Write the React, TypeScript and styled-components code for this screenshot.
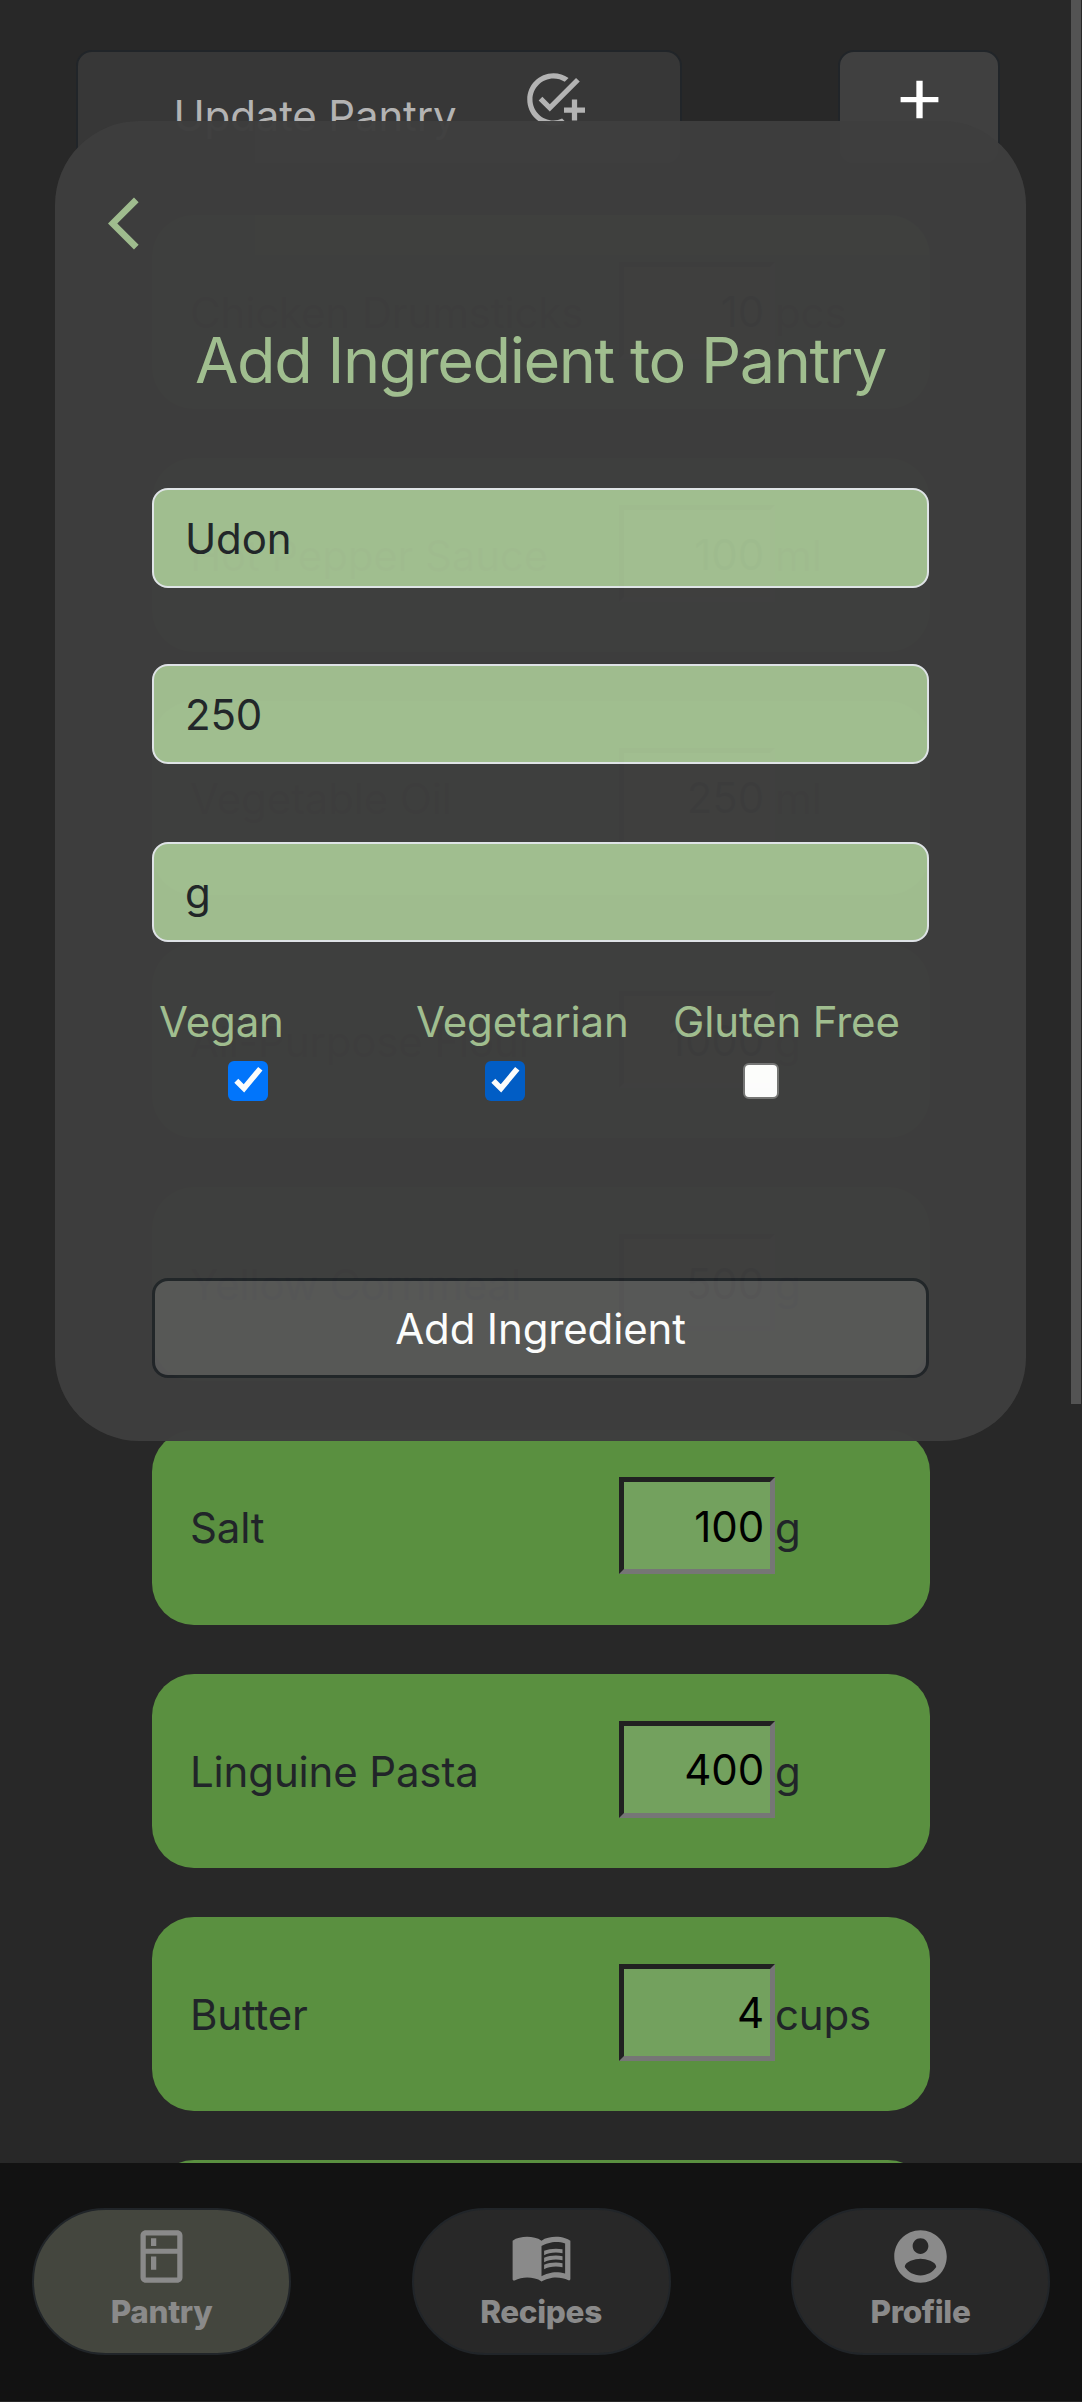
import React from "react";
import styled, { createGlobalStyle } from "styled-components";

const GlobalStyle = createGlobalStyle`
  *, *::before, *::after { box-sizing: border-box; }
  body {
    margin: 0;
    background: #282828;
    font-family: Inter, "Liberation Sans", sans-serif;
    font-size: 42px;
    line-height: 63px;
    letter-spacing: -0.15px;
    color: #212529;
  }
  input, button { font-family: inherit; letter-spacing: inherit; margin: 0; }
`;

const Page = styled.div`
  position: relative;
  height: 2402px;
  overflow: hidden;
  background: #282828;
`;

const Header = styled.header`
  display: flex;
  justify-content: space-between;
  padding: 50px 82px 0 76px;
`;

const HeaderButton = styled.button<{ $width: number; $dimmed?: boolean }>`
  display: flex;
  align-items: flex-start;
  justify-content: center;
  width: ${(p) => p.$width}px;
  height: 115px;
  padding: 16px 0 0;
  border: 2px solid #212529;
  border-radius: 16px;
  background: ${(p) => (p.$dimmed ? "#373737" : "#404040")};
  color: ${(p) => (p.$dimmed ? "#b3b3b3" : "#fff")};
  font-size: 42px;
  line-height: 63px;
`;

const UpdateLabel = styled.span`
  margin-top: 16px;
  margin-right: 65px;
`;

const List = styled.main`
  display: flex;
  flex-direction: column;
  gap: 49px;
  padding: 50px 152.5px 0 152px;
`;

const Card = styled.section`
  display: flex;
  align-items: flex-start;
  flex: none;
  height: 194.1px;
  padding-left: 38px;
  border-radius: 42px;
  background: #5a9040;
`;

const Name = styled.span`
  width: 429px;
  padding-top: 66px;
`;

const Quantity = styled.input`
  width: 156px;
  height: 97px;
  margin-top: 47px;
  padding: 1px 6px 0 5px;
  border: 5px solid;
  border-color: #212121 #767676 #767676 #212121;
  border-radius: 0;
  outline: 0;
  background: #73a15e;
  color: #000;
  font-size: 42px;
  text-align: right;
`;

const Unit = styled.span`
  padding-top: 66px;
`;

const Modal = styled.form`
  position: absolute;
  top: 121px;
  left: 55px;
  width: 971px;
  height: 1320px;
  padding: 71px 97px 0;
  border-radius: 84px;
  background: #3e3e3e;
  opacity: 0.98;
  display: flex;
  flex-direction: column;
`;

const BackButton = styled.button`
  display: flex;
  align-self: flex-start;
  margin-left: -44px;
  padding: 0;
  border: 0;
  background: none;
  color: #a2bf91;
`;

const Title = styled.h1`
  margin: 67px 0 90px;
  font-size: 63px;
  font-weight: 400;
  line-height: 76px;
  letter-spacing: -1.45px;
  text-align: center;
  color: #a2bf91;
  white-space: nowrap;
`;

const Field = styled.input`
  flex: none;
  width: 777px;
  height: 100px;
  margin-bottom: 76px;
  padding: 0 31px;
  border: 2px solid #e2e6ea;
  border-radius: 16px;
  outline: 0;
  background: #a2bf91;
  color: #212529;
  font-size: 42px;

  & + & + & { margin-bottom: 0; margin-top: 2px; }
`;

const Options = styled.div`
  display: grid;
  grid-template-columns: repeat(3, 257px);
  padding: 48px 0 0 7px;
`;

const Option = styled.label`
  display: flex;
  flex-direction: column;
  color: #a2bf91;
  white-space: nowrap;
`;

const Box = styled.span<{ $fill: string; $checked: boolean }>`
  display: flex;
  width: ${(p) => (p.$checked ? 39.5 : 36)}px;
  height: ${(p) => (p.$checked ? 39.5 : 36)}px;
  margin: ${(p) => (p.$checked ? "8px 0 0 69px" : "10px 0 0 70px")};
  border: ${(p) => (p.$checked ? "0" : "2.6px solid #767676")};
  border-radius: 6px;
  background: ${(p) => p.$fill};
`;

const Submit = styled.button`
  flex: none;
  width: 777px;
  height: 100px;
  margin-top: 177.5px;
  padding: 0;
  border: 3px solid #212529;
  border-radius: 16px;
  background: #575757;
  color: #fff;
  font-size: 42px;
  line-height: 63px;
`;

const Nav = styled.nav`
  position: absolute;
  left: 0;
  right: 0;
  top: 2163px;
  height: 238px;
  display: flex;
  justify-content: space-between;
  padding: 45px 32px 0;
  background: #121212;
`;

const NavButton = styled.button<{ $active?: boolean }>`
  display: flex;
  flex-direction: column;
  align-items: center;
  width: 259px;
  height: 147px;
  padding: 15px 0 0;
  border: 2.6px solid #212529;
  border-radius: 74px;
  background: ${(p) => (p.$active ? "#44463e" : "#282828")};
  color: #8a8a8a;
  font-size: 31.5px;
  font-weight: 800;
  line-height: 47px;
  letter-spacing: -0.35px;
`;

const ScrollThumb = styled.div`
  position: absolute;
  top: 0;
  right: 1px;
  width: 10px;
  height: 1404px;
  background: #535353;
`;

const Glyph = ({ d }: { d: string }) => (
  <svg width="63" height="63" viewBox="0 0 24 24" fill="currentColor">
    <path d={d} />
  </svg>
);

const ADD_TASK =
  "M22 5.18 10.59 16.6l-4.24-4.24 1.41-1.41 2.83 2.83 10-10L22 5.18zM12 20c-4.41 0-8-3.59-8-8s3.59-8 8-8c1.57 0 3.04.46 4.28 1.25l1.45-1.45A10.02 10.02 0 0 0 12 2C6.48 2 2 6.48 2 12s4.48 10 10 10c1.73 0 3.36-.44 4.78-1.22l-1.5-1.5c-1 .46-2.11.72-3.28.72zm7-5h-3v2h3v3h2v-3h3v-2h-3v-3h-2v3z";
const ADD = "M19.2 13h-6v6.1h-2.4V13h-6v-2h6V4.9h2.4V11h6v2z";
const BACK = "M11.67 3.87 9.9 2.1 0 12l9.9 9.9 1.77-1.77L3.54 12z";
const KITCHEN =
  "M18 2.01 6 2c-1.1 0-2 .89-2 2v16c0 1.1.9 2 2 2h12c1.1 0 2-.9 2-2V4c0-1.11-.9-1.99-2-1.99zM18 20H6v-9.02h12V20zm0-11H6V4h12v5zM8 5h2v3H8V5zm0 7h2v5H8v-5z";
const BOOK =
  "M21 5c-1.11-.35-2.33-.5-3.5-.5-1.95 0-4.05.4-5.5 1.5-1.45-1.1-3.55-1.5-5.5-1.5S2.45 4.9 1 6v14.65c0 .25.25.5.5.5.1 0 .15-.05.25-.05C3.1 20.45 5.05 20 6.5 20c1.95 0 4.05.4 5.5 1.5 1.35-.85 3.8-1.5 5.5-1.5 1.65 0 3.35.3 4.75 1.05.1.05.15.05.25.05.25 0 .5-.25.5-.5V6c-.6-.45-1.25-.75-2-1zm0 13.5c-1.1-.35-2.3-.5-3.5-.5-1.7 0-4.15.65-5.5 1.5V8c1.35-.85 3.8-1.5 5.5-1.5 1.2 0 2.4.15 3.5.5v11.5zM17.5 10.5c.88 0 1.73.09 2.5.26V9.24c-.79-.15-1.64-.24-2.5-.24-1.7 0-3.24.29-4.5.83v1.66c1.13-.64 2.7-.99 4.5-.99zM13 12.49v1.66c1.13-.64 2.7-.99 4.5-.99.88 0 1.73.09 2.5.26V11.9c-.79-.15-1.64-.24-2.5-.24-1.7 0-3.24.3-4.5.83zM17.5 14.33c-1.7 0-3.24.29-4.5.83v1.66c1.13-.64 2.7-.99 4.5-.99.88 0 1.73.09 2.5.26v-1.52c-.79-.16-1.64-.24-2.5-.24z";
const ACCOUNT =
  "M12 2C6.48 2 2 6.48 2 12s4.48 10 10 10 10-4.48 10-10S17.52 2 12 2zm0 3c1.66 0 3 1.34 3 3s-1.34 3-3 3-3-1.34-3-3 1.34-3 3-3zm0 14.2c-2.5 0-4.71-1.28-6-3.22.03-1.99 4-3.08 6-3.08 1.99 0 5.97 1.09 6 3.08-1.29 1.94-3.5 3.22-6 3.22z";

const pantry = [
  { name: "Chicken Drumsticks", amount: "10", unit: "pcs" },
  { name: "Hot Pepper Sauce", amount: "100", unit: "ml" },
  { name: "Vegetable Oil", amount: "250", unit: "ml" },
  { name: "All-Purpose Flour", amount: "1000", unit: "g" },
  { name: "Yellow Cornmeal", amount: "500", unit: "g" },
  { name: "Salt", amount: "100", unit: "g" },
  { name: "Linguine Pasta", amount: "400", unit: "g" },
  { name: "Butter", amount: "4", unit: "cups" },
  { name: "", amount: "", unit: "" },
];

const diets = [
  { label: "Vegan", checked: true, fill: "#0075ff" },
  { label: "Vegetarian", checked: true, fill: "#005cc8" },
  { label: "Gluten Free", checked: false, fill: "#fff" },
];

export default function App() {
  return (
    <>
      <GlobalStyle />
      <Page>
        <Header>
          <HeaderButton $width={606} $dimmed>
            <UpdateLabel>Update Pantry</UpdateLabel>
            <Glyph d={ADD_TASK} />
          </HeaderButton>
          <HeaderButton $width={162}>
            <Glyph d={ADD} />
          </HeaderButton>
        </Header>
        <List>
          {pantry.map((item, i) => (
            <Card key={i}>
              {item.name && (
                <>
                  <Name>{item.name}</Name>
                  <Quantity readOnly value={item.amount} />
                  <Unit>{item.unit}</Unit>
                </>
              )}
            </Card>
          ))}
        </List>
        <Modal>
          <BackButton type="button">
            <Glyph d={BACK} />
          </BackButton>
          <Title>Add Ingredient to Pantry</Title>
          <Field readOnly value="Udon" />
          <Field readOnly value="250" />
          <Field readOnly value="g" />
          <Options>
            {diets.map((diet) => (
              <Option key={diet.label}>
                {diet.label}
                <Box $fill={diet.fill} $checked={diet.checked}>
                  {diet.checked && (
                    <svg width="39" height="39" viewBox="0 0 39 39" fill="none" stroke="#fff" strokeWidth="5.6">
                      <path d="M8.3 19.7 L16 27.4 L32.3 7.8" />
                    </svg>
                  )}
                </Box>
              </Option>
            ))}
          </Options>
          <Submit type="button">Add Ingredient</Submit>
        </Modal>
        <Nav>
          <NavButton $active>
            <Glyph d={KITCHEN} />
            Pantry
          </NavButton>
          <NavButton>
            <Glyph d={BOOK} />
            Recipes
          </NavButton>
          <NavButton>
            <Glyph d={ACCOUNT} />
            Profile
          </NavButton>
        </Nav>
        <ScrollThumb />
      </Page>
    </>
  );
}
